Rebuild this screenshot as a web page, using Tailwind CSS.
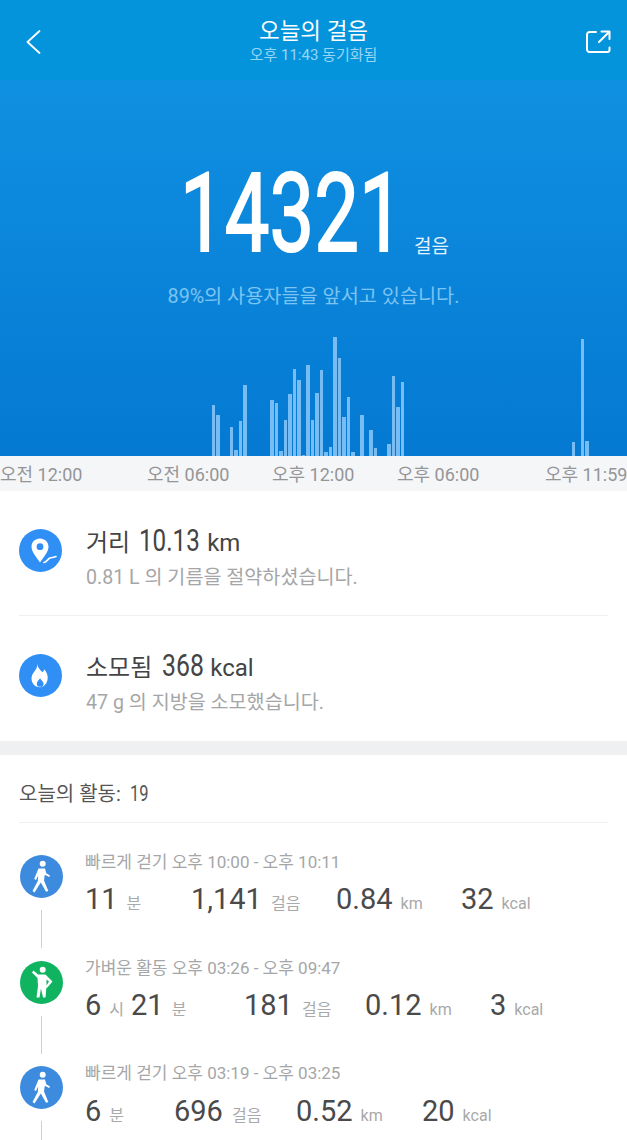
<!DOCTYPE html>
<html lang="ko">
<head>
  <meta charset="UTF-8" />
  <meta name="viewport" content="width=device-width, initial-scale=1.0" />
  <title>오늘의 걸음</title>
  <script src="https://cdn.jsdelivr.net/npm/@tailwindcss/browser@4"></script>
</head>
<body class="bg-white font-[Roboto,'Noto_Sans_CJK_KR',sans-serif]">
  <div class="w-[627px] h-[1140px] overflow-hidden">

    <!-- header -->
    <header class="h-[80px] bg-[#0394dc] flex items-start justify-between pl-[26px] pr-[16px] pt-[30px] relative">
      <svg class="w-[16px] h-[24px]" viewBox="0 0 16 24" fill="none" stroke="white" stroke-width="1.8" stroke-linecap="round" stroke-linejoin="round"><path d="M13.5 1 1.5 12l12 11"/></svg>
      <div class="absolute inset-x-0 top-[17px] text-center">
        <h1 class="text-[22.5px] leading-[28px] text-white">오늘의 걸음</h1>
        <p class="text-[15px] leading-[20px] text-[#98d5f5]">오후 11:43 동기화됨</p>
      </div>
      <svg class="w-[25px] h-[24px]" viewBox="0 0 25 24" fill="none" stroke="white" stroke-width="2" stroke-linecap="round" stroke-linejoin="round"><path d="M10 2H3.5A2.5 2.5 0 0 0 1 4.5v15A2.5 2.5 0 0 0 3.5 22h18a2 2 0 0 0 2-2v-2.500"/><path d="M13 12 23 2M15.500 1.500H23.500V9"/></svg>
    </header>

    <!-- hero -->
    <section class="h-[376px] bg-linear-to-b from-[#1090e1] to-[#0579d2] flex flex-col">
      <div class="flex items-end pl-[180px] pt-[74px]">
        <div class="w-[234px] h-[120px] leading-[120px] text-[110px] text-white origin-left scale-x-[0.724] [-webkit-text-stroke:2px_white]">14321</div>
        <span class="text-[19px] leading-[24px] text-[#e4f3fd] mb-[15px]">걸음</span>
      </div>
      <p class="text-center text-[19.7px] leading-[24px] text-[#7cc4f2] mt-[11px]">89%의 사용자들을 앞서고 있습니다.</p>
      <div id="chart" class="mt-auto h-[125px] flex items-end pl-[211.5px]"></div>
    </section>

    <!-- time axis -->
    <div class="h-[35px] pt-[2px] bg-[#f5f6f8] flex items-center text-[18px] text-[#949597] whitespace-nowrap">
      <span class="w-[82px]">오전 12:00</span>
      <span class="w-[82px] ml-[65px]">오전 06:00</span>
      <span class="w-[82px] ml-[43px]">오후 12:00</span>
      <span class="w-[82px] ml-[43px]">오후 06:00</span>
      <span class="w-[82px] ml-[66px]">오후 11:59</span>
    </div>

    <!-- distance, calories -->
    <section class="h-[250px] px-[19px] flex flex-col">
      <div class="h-[125px] flex items-start pt-[38px] gap-[24px] border-b border-[#eeeff0]">
        <svg class="w-[43px] h-[43px] shrink-0" viewBox="0 0 43 43">
          <circle cx="21.500" cy="21.500" r="21.500" fill="#2f8ff5"/>
          <path fill-rule="evenodd" fill="white" d="M21 9.500c-4.800 0-8.500 3.600-8.500 8.200 0 5.400 5.800 11.500 8.500 15.800 2.700-4.300 8.500-10.400 8.500-15.800 0-4.600-3.700-8.200-8.500-8.200Zm0 4.800a3.400 3.400 0 1 1 0 6.800 3.400 3.400 0 0 1 0-6.800Z"/>
          <path fill="none" stroke="white" stroke-width="1.600" stroke-linecap="round" d="M25 33.500c3-.5 3.500-3.500 6-4.500 2-.7 3.500-.5 6-1.500"/>
        </svg>
        <div class="-mt-[11px]">
          <div class="flex items-baseline h-[34px] text-[24px] text-[#444445] whitespace-nowrap">
            <span>거리</span>
            <span class="w-[61px] ml-[9px] text-[31px] origin-left scale-x-[0.78]">10.13</span>
            <span class="ml-[7px]">km</span>
          </div>
          <p class="text-[19.6px] leading-[24px] text-[#a5a6a7] mt-[14px]">0.81 L 의 기름을 절약하셨습니다.</p>
        </div>
      </div>
      <div class="h-[125px] flex items-start pt-[38px] gap-[24px]">
        <svg class="w-[43px] h-[43px] shrink-0" viewBox="0 0 43 43">
          <circle cx="21.500" cy="21.500" r="21.500" fill="#2f8ff5"/>
          <path fill-rule="evenodd" fill="white" d="M18 10c.8 4 3 5.600 5.500 8.200 1-.8 1.500-1.800 1.700-3 2.200 2.600 3.500 5.400 3.500 8.400 0 5.300-3.300 9.700-7.900 9.700-4.800 0-8.300-3.900-8.300-8.700 0-3 1.400-5.200 3.200-7.500 1.700-2.200 2.700-3.900 2.300-7.100Zm3 14.300c-.8 1.700-3.200 3.300-3.200 5.400 0 1.300.7 2.500 1.800 3h3.200c1.100-.5 1.800-1.700 1.800-3 0-2.100-2.800-3.700-3.600-5.400Z"/>
        </svg>
        <div class="-mt-[11px]">
          <div class="flex items-baseline h-[34px] text-[24px] text-[#444445] whitespace-nowrap">
            <span>소모됨</span>
            <span class="w-[42px] ml-[10px] text-[31px] origin-left scale-x-[0.8]">368</span>
            <span class="ml-[6px]">kcal</span>
          </div>
          <p class="text-[19.6px] leading-[24px] text-[#a5a6a7] mt-[14px]">47 g 의 지방을 소모했습니다.</p>
        </div>
      </div>
    </section>

    <div class="h-[14px] bg-[#eff0f2]"></div>

    <!-- activities -->
    <section class="px-[19px]">
      <div class="h-[68px] flex items-center gap-[9px] pt-[10px] border-b border-[#eeeff0] text-[20px] text-[#555556] whitespace-nowrap">
        <span>오늘의 활동:</span>
        <span class="text-[22px] origin-left scale-x-[0.75]">19</span>
      </div>

      <div class="h-[106px] flex gap-[23px] pt-[31px] relative">
        <svg class="w-[43px] h-[43px] ml-[1px] mt-[1px] shrink-0" viewBox="0 0 43 43">
          <circle cx="21.500" cy="21.500" r="21.500" fill="#3d8bde"/>
          <circle cx="22.700" cy="8.700" r="3" fill="white"/>
          <path fill="white" d="M18.500 13.500H25L26.300 18.300 30 20.500 29.200 22 24.800 19.800 24 25.500 28.300 36 26 36.700 20.800 27.500 14.500 37.500 12.500 36 17.800 26 18.200 20.500 16 25 14.200 24Z"/>
        </svg>
        <div class="absolute left-[22px] top-[87px] w-px h-[38px] bg-[#cfd0d2]"></div>
        <div class="-mt-[2px] -ml-[1px]">
          <p class="text-[17px] leading-[20px] text-[#a5a6a7] whitespace-nowrap">빠르게 걷기 오후 10:00 - 오후 10:11</p>
          <div class="flex items-baseline mt-[6px] h-[36px] whitespace-nowrap text-[16px] text-[#a8a9aa]">
            <div class="w-[106px]"><span class="text-[29px] text-[#4a4a4b] mr-[9px]">11</span>분</div>
            <div class="w-[145px]"><span class="text-[29px] text-[#4a4a4b] mr-[9px]">1,141</span>걸음</div>
            <div class="w-[125px]"><span class="text-[29px] text-[#4a4a4b] mr-[8px]">0.84</span>km</div>
            <div><span class="text-[29px] text-[#4a4a4b] mr-[8px]">32</span>kcal</div>
          </div>
        </div>
      </div>

      <div class="h-[106px] flex gap-[23px] pt-[31px] relative">
        <svg class="w-[43px] h-[43px] ml-[1px] mt-[1px] shrink-0" viewBox="0 0 43 43">
          <circle cx="21.500" cy="21.500" r="21.500" fill="#0fb360"/>
          <circle cx="22.700" cy="8.700" r="3" fill="white"/>
          <path fill="white" d="M12 11.500 13.500 9.500 18 13.500H25.500L32.500 20.500 27 27 25.500 26 29 20.500 26.500 18.500V25L25.500 36.500H23L21 27.500 19.500 36.500H16.500L18 25 17.500 17Z"/>
        </svg>
        <div class="absolute left-[22px] top-[87px] w-px h-[38px] bg-[#cfd0d2]"></div>
        <div class="-mt-[2px] -ml-[1px]">
          <p class="text-[17px] leading-[20px] text-[#a5a6a7] whitespace-nowrap">가벼운 활동 오후 03:26 - 오후 09:47</p>
          <div class="flex items-baseline mt-[6px] h-[36px] whitespace-nowrap text-[16px] text-[#a8a9aa]">
            <div class="w-[159px]"><span class="text-[29px] text-[#4a4a4b] mr-[8px]">6</span>시<span class="text-[29px] text-[#4a4a4b] ml-[7px] mr-[8px]">21</span>분</div>
            <div class="w-[121px]"><span class="text-[29px] text-[#4a4a4b] mr-[9px]">181</span>걸음</div>
            <div class="w-[125px]"><span class="text-[29px] text-[#4a4a4b] mr-[8px]">0.12</span>km</div>
            <div><span class="text-[29px] text-[#4a4a4b] mr-[8px]">3</span>kcal</div>
          </div>
        </div>
      </div>

      <div class="h-[106px] flex gap-[23px] pt-[30px] relative">
        <svg class="w-[43px] h-[43px] ml-[1px] mt-[1px] shrink-0" viewBox="0 0 43 43">
          <circle cx="21.500" cy="21.500" r="21.500" fill="#3d8bde"/>
          <circle cx="22.700" cy="8.700" r="3" fill="white"/>
          <path fill="white" d="M18.500 13.500H25L26.300 18.300 30 20.500 29.200 22 24.800 19.800 24 25.500 28.300 36 26 36.700 20.800 27.500 14.500 37.500 12.500 36 17.800 26 18.200 20.500 16 25 14.200 24Z"/>
        </svg>
        <div class="absolute left-[22px] top-[86px] w-px h-[38px] bg-[#cfd0d2]"></div>
        <div class="-mt-[2px] -ml-[1px]">
          <p class="text-[17px] leading-[20px] text-[#a5a6a7] whitespace-nowrap">빠르게 걷기 오후 03:19 - 오후 03:25</p>
          <div class="flex items-baseline mt-[7px] h-[36px] whitespace-nowrap text-[16px] text-[#a8a9aa]">
            <div class="w-[89px]"><span class="text-[29px] text-[#4a4a4b] mr-[8px]">6</span>분</div>
            <div class="w-[122px]"><span class="text-[29px] text-[#4a4a4b] mr-[9px]">696</span>걸음</div>
            <div class="w-[126px]"><span class="text-[29px] text-[#4a4a4b] mr-[8px]">0.52</span>km</div>
            <div><span class="text-[29px] text-[#4a4a4b] mr-[8px]">20</span>kcal</div>
          </div>
        </div>
      </div>
    </section>
  </div>

  <script>
    // bar heights per 4.5px slot, starting at x=212
    const steps = [51,41,0,0,29,6,35,71,0,0,0,0,0,56,53,5,36,62,87,76,1,91,36,63,86,4,9,119,98,39,59,4,0,41,0,26,8,0,0,12,80,49,74];
    const tail = {80: 14, 82: 117, 83: 15};
    const chart = document.getElementById('chart');
    for (let i = 0; i < 84; i++) {
      const h = i < steps.length ? steps[i] : (tail[i] || 0);
      const slot = document.createElement('div');
      slot.className = 'w-[4.5px] pr-[1px] shrink-0';
      const bar = document.createElement('div');
      bar.className = 'bg-[#77bdf3]';
      bar.style.height = h + 'px';
      slot.appendChild(bar);
      chart.appendChild(slot);
    }
  </script>
</body>
</html>
